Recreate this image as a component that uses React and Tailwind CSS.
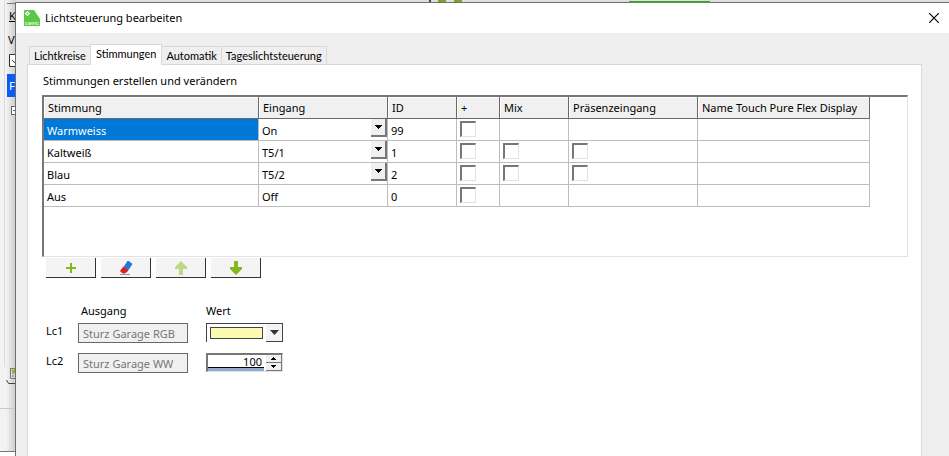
import { useState } from "react"

const tabs = ["Lichtkreise", "Stimmungen", "Automatik", "Tageslichtsteuerung"]

const columns = ["Stimmung", "Eingang", "ID", "+", "Mix", "Präsenzeingang", "Name Touch Pure Flex Display"]

const moods = [
  { name: "Warmweiss", input: "On", id: 99, select: true, mix: false },
  { name: "Kaltweiß", input: "T5/1", id: 1, select: true, mix: true },
  { name: "Blau", input: "T5/2", id: 2, select: true, mix: true },
  { name: "Aus", input: "Off", id: 0, select: false, mix: false }
]

function Cell({ children }) {
  return (
    <td className="h-[22px] p-0 border-r border-b border-[#bdbdbd] align-top">
      {children}
    </td>
  )
}

function Check({ label }) {
  return (
    <input
      type="checkbox"
      aria-label={label}
      className="block appearance-none size-4 mt-[2px] ml-[3px] bg-white border-t-2 border-l-2 border-r border-b border-t-[#777] border-l-[#777] border-r-[#e3e3e3] border-b-[#e3e3e3] checked:bg-[#0078d7]"
    />
  )
}

function InputSelect({ mood }) {
  return (
    <div className="relative">
      <select
        aria-label={`Eingang ${mood.name}`}
        defaultValue={mood.input}
        className="block appearance-none w-full h-[21px] pt-[3px] pl-[3px] leading-[18px] bg-transparent outline-none"
      >
        <option>On</option>
        <option>Off</option>
        <option>T5/1</option>
        <option>T5/2</option>
      </select>
      <span className="absolute right-0 top-0 w-4 h-[18px] flex items-center justify-center pointer-events-none bg-[#f0f0f0] border-r-2 border-b-2 border-[#777]">
        <svg width="7" height="4" viewBox="0 0 7 4" shapeRendering="crispEdges">
          <path d="M0 0H7V1H6V2H5V3H4V4H3V3H2V2H1V1H0Z" fill="#000" />
        </svg>
      </span>
    </div>
  )
}

function ToolButton({ label, disabled, children }) {
  return (
    <button
      type="button"
      aria-label={label}
      disabled={disabled}
      className="w-[50px] h-5 flex items-center justify-center bg-[#f4f4f4] border-r border-b border-[#333]"
    >
      {children}
    </button>
  )
}

function Arrow({ down, color }) {
  return (
    <svg width="14" height="14" viewBox="0 0 14 14">
      <path
        d={down ? "M5 0H9V6H13V8L7 14L1 8V6H5Z" : "M5 14H9V8H13V6L7 0L1 6V8H5Z"}
        fill={color}
      />
    </svg>
  )
}

// part of the main window that stays visible next to the dialog
function MainWindow() {
  return (
    <div className="w-[15px] shrink-0 overflow-hidden whitespace-nowrap flex flex-col bg-linear-to-r from-[#f3f3f3] from-40% to-[#cfcfcf]">
      <div className="h-[367px] ml-1 border-l border-[#dcdcdc] pl-[2px]">
        <div className="h-1 border-b border-[#777]"></div>
        <div className="h-6 pl-[2px] pt-[2px] leading-5 underline">K</div>
        <div className="h-6 pl-px pt-[2px] leading-5">V</div>
        <div className="h-[22px] pt-[2px] pl-[2px]">
          <svg width="13" height="13" viewBox="0 0 13 13">
            <path d="M.5.5H12.5V12.5H.5Z" fill="#fff" stroke="#333" />
            <path d="M3 6L6 9L11 3" fill="none" stroke="#333" />
          </svg>
        </div>
        <div className="h-[23px] pl-[2px] leading-[23px] bg-[#0a5cf5] text-white">F</div>
        <div className="pt-[9px] pl-1">
          <svg width="9" height="9" viewBox="0 0 9 9" shapeRendering="crispEdges">
            <path d="M.5.5H8.5V8.5H.5ZM2 4.5H7" fill="#fff" stroke="#666" />
          </svg>
        </div>
      </div>
      <svg width="15" height="18" viewBox="0 0 15 18" className="shrink-0">
        <path d="M6.500 13L8.500 16.500H15" fill="none" stroke="#444" />
        <path d="M10.500 1.500H15M10.500 1V11.500H15" fill="none" stroke="#777" />
        <path d="M12 6H14M12 9H14" stroke="#777" />
        <path d="M12 3L14 5L16 1" fill="none" stroke="#84b81c" strokeWidth="2" />
      </svg>
      <div className="h-6 shrink-0 border-b border-[#c8c8c8]"></div>
      <div className="h-[43px] shrink-0 border-b border-[#777]"></div>
      <div className="flex-1 bg-white"></div>
    </div>
  )
}

export default function App() {

  const [tab, setTab] = useState("Stimmungen")

  return (
    <div className="min-h-screen flex text-[11px] text-black bg-[#efefef] font-['Noto_Sans',sans-serif]">

      <MainWindow />

      <div className="flex-1 min-w-0 flex flex-col">

        {/* toolbar of the main window */}
        <div className="h-[2px] flex bg-[#dedede]">
          <div className="w-[2px] ml-[414px] bg-[#444]"></div>
          <div className="w-2 ml-[7px] bg-[#7aa81f]"></div>
          <div className="w-2 ml-2 bg-[#7aa81f]"></div>
          <div className="relative w-[81px] ml-[167px] mt-px -mb-px bg-[#4a9c3c]"></div>
        </div>

        <main className="flex-1 flex flex-col border-t border-l border-[#6e6e6e] bg-[#efefef]">

          <header className="h-[30px] flex items-center pl-2 pr-[10px] bg-white">
            <svg width="16" height="16" viewBox="0 0 16 16">
              <path d="M1 0H10L16 9V15Q16 16 15 16H1Q0 16 0 15V1Q0 0 1 0Z" fill="#5bc846" />
              <circle cx="3.500" cy="3.500" r="1.500" fill="none" stroke="#fff" strokeWidth="1.200" />
              <path d="M3.500 1V2M3.500 5V6M1 3.500H2M5 3.500H6" stroke="#fff" />
              <path d="M3 12.500H1.500V14.500H3M4 12.500H5.500V14.500H4ZM6.500 15V12.500L8 14.500V12M9 15V12.500H10.500M9 13.700H10.500M11.500 12V15M14.500 12.500H12.700V14.500H14.500V13.500" fill="none" stroke="#d6f5cf" strokeWidth=".8" />
            </svg>
            <h1 className="flex-1 pl-[5px] leading-5">Lichtsteuerung bearbeiten</h1>
            <button type="button" aria-label="Schließen">
              <svg width="10" height="10" viewBox="0 0 10 10">
                <path d="M.2.2L9.800 9.800M9.800.2L.2 9.800" stroke="#000" strokeWidth="1.200" />
              </svg>
            </button>
          </header>

          <div className="flex-1 flex flex-col pt-[11px] pl-[11px] pr-[27px]">

            <div role="tablist" className="flex items-end pl-[2px] h-5 font-['Lato','Noto_Sans',sans-serif]">
              {tabs.map((name) => (
                <button
                  key={name}
                  type="button"
                  role="tab"
                  aria-selected={tab === name}
                  onClick={() => setTab(name)}
                  className={
                    tab === name
                      ? "relative z-10 h-[21px] -mb-px -ml-px px-[5px] pb-[2px] leading-[18px] bg-white border border-b-0 border-[#d9d9d9]"
                      : "h-[18px] px-1 leading-[18px] border-t border-r first:border-l border-[#d9d9d9]"
                  }
                >
                  {name}
                </button>
              ))}
            </div>

            <section className="flex-1 bg-white border border-b-0 border-[#d9d9d9] pt-[6px] pl-[14px] pr-[13px]">

              <h2 className="leading-5 pl-px">Stimmungen erstellen und verändern</h2>

              <div className="mt-1 min-h-[162px] border-t-2 border-l-2 border-t-[#777] border-l-[#777] border-r border-b border-r-[#e3e3e3] border-b-[#e3e3e3] overflow-hidden">
                <table className="w-[826px] table-fixed border-separate border-spacing-0">
                  <colgroup>
                    <col className="w-[215px]" />
                    <col className="w-[129px]" />
                    <col className="w-[69px]" />
                    <col className="w-[43px]" />
                    <col className="w-[69px]" />
                    <col className="w-[129px]" />
                    <col className="w-[172px]" />
                  </colgroup>
                  <thead>
                    <tr>
                      {columns.map((c) => (
                        <th key={c} className="h-[22px] p-0 text-left font-normal border-r border-b border-[#696969]">
                          <div className="h-[21px] pl-[3px] leading-[19px] whitespace-nowrap bg-[#f0f0f0] border-t border-l border-white">{c}</div>
                        </th>
                      ))}
                    </tr>
                  </thead>
                  <tbody>
                    {moods.map((m, i) => (
                      <tr key={m.name}>
                        <Cell>
                          <div className={i === 0 ? "h-[21px] pl-[3px] pt-[3px] leading-[18px] bg-[#0078d7] text-white" : "h-[21px] pl-[3px] pt-[3px] leading-[18px]"}>
                            {m.name}
                          </div>
                        </Cell>
                        <Cell>
                          {m.select
                            ? <InputSelect mood={m} />
                            : <div className="pl-[3px] pt-[3px] leading-[18px]">{m.input}</div>}
                        </Cell>
                        <Cell><div className="pl-[3px] pt-[3px] leading-[18px]">{m.id}</div></Cell>
                        <Cell><Check label={`+ ${m.name}`} /></Cell>
                        <Cell>{m.mix && <Check label={`Mix ${m.name}`} />}</Cell>
                        <Cell>{m.mix && <Check label={`Präsenzeingang ${m.name}`} />}</Cell>
                        <Cell></Cell>
                      </tr>
                    ))}
                  </tbody>
                </table>
              </div>

              <div className="flex gap-[5px] pt-px pl-1">
                <ToolButton label="Hinzufügen">
                  <svg width="12" height="12" viewBox="0 0 12 12">
                    <path d="M6 1V11M1 6H11" stroke="#84b81c" strokeWidth="2" />
                  </svg>
                </ToolButton>
                <ToolButton label="Löschen">
                  <svg width="14" height="14" viewBox="0 0 14 14">
                    <path d="M9 0L13 3L9 9L5 6Z" fill="#2478dc" stroke="#2478dc" strokeLinejoin="round" />
                    <path d="M4.500 6L9 9.500L6 12H3.500L1.500 10Z" fill="#dc2020" stroke="#dc2020" strokeLinejoin="round" />
                    <path d="M1 13.500H11" stroke="#999" />
                  </svg>
                </ToolButton>
                <ToolButton label="Nach oben" disabled><Arrow color="#bcd98a" /></ToolButton>
                <ToolButton label="Nach unten"><Arrow down color="#84b81c" /></ToolButton>
              </div>

              <div className="grid grid-cols-[32px_110px_95px] gap-y-[10px] items-start pl-1 pt-[23px]">
                <div className="col-start-2 pl-[3px] h-3 leading-5">Ausgang</div>
                <div className="ml-[18px] h-3 leading-5">Wert</div>

                <label htmlFor="lc1" className="leading-4">Lc1</label>
                <input id="lc1" disabled defaultValue="Sturz Garage RGB" className="w-[110px] h-5 pl-1 bg-[#f0f0f0] border border-[#696969] text-[#777]" />
                <div className="relative ml-[18px] w-[77px] h-[19px]">
                  <select aria-label="Wert Lc1" className="block appearance-none w-full h-full bg-white border-t border-l border-[#444]">
                    <option value="#f9f9ad" aria-label="Hellgelb"></option>
                  </select>
                  <span className="absolute left-1 top-1 w-[53px] h-3 pointer-events-none bg-[#fafab0] border border-[#444]"></span>
                  <span className="absolute right-0 top-px w-[17px] h-[18px] flex items-center justify-center pointer-events-none bg-[#f4f4f4] border-r border-b border-[#444]">
                    <svg width="9" height="5" viewBox="0 0 9 5"><path d="M0 0H9L4.500 5Z" fill="#333" /></svg>
                  </span>
                </div>

                <label htmlFor="lc2" className="leading-4">Lc2</label>
                <input id="lc2" disabled defaultValue="Sturz Garage WW" className="w-[110px] h-5 pl-1 bg-[#f0f0f0] border border-[#696969] text-[#777]" />
                <div className="ml-[18px] w-[77px] h-[19px] flex bg-white border-t-2 border-l-2 border-r border-b border-t-[#777] border-l-[#777] border-r-[#e3e3e3] border-b-[#e3e3e3]">
                  <div className="w-[56px] bg-[#8fa9d0]">
                    <input aria-label="Wert Lc2" inputMode="numeric" defaultValue="100" className="block w-full h-[13px] pr-[2px] text-right leading-3 bg-white border-b border-black outline-none" />
                  </div>
                  <div className="flex-1 pl-[2px] flex flex-col">
                    <button type="button" aria-label="Erhöhen" className="flex-1 flex items-center justify-center bg-[#f0f0f0] border-r border-b border-[#777]">
                      <svg width="5" height="3" viewBox="0 0 5 3" shapeRendering="crispEdges"><path d="M2 0H3V1H4V2H5V3H0V2H1V1H2Z" /></svg>
                    </button>
                    <button type="button" aria-label="Verringern" className="flex-1 flex items-center justify-center bg-[#f0f0f0] border-r border-b border-[#777]">
                      <svg width="5" height="3" viewBox="0 0 5 3" shapeRendering="crispEdges"><path d="M0 0H5V1H4V2H3V3H2V2H1V1H0Z" /></svg>
                    </button>
                  </div>
                </div>
              </div>

            </section>

          </div>

        </main>

      </div>

    </div>
  )
}
